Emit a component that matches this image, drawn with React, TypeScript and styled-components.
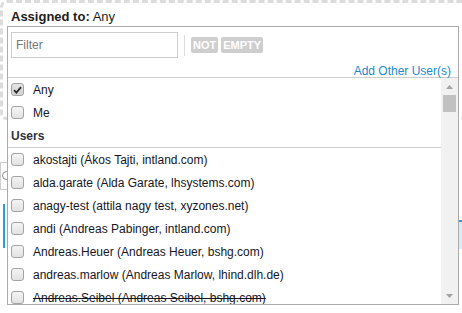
import React from 'react';
import styled, { createGlobalStyle } from 'styled-components';
import { Search } from 'lucide-react';

const GlobalStyle = createGlobalStyle`
  html, body {
    margin: 0;
    padding: 0;
    background: #fff;
  }
  body {
    font-family: "Liberation Sans", Arial, sans-serif;
    overflow: hidden;
  }
`;

const Page = styled.div`
  position: relative;
  width: 462px;
  height: 313px;
  overflow: hidden;
`;

const FilterBox = styled.div`
  box-sizing: border-box;
  width: 600px;
  height: 120px;
  border: 3px dashed #dcdcdc;
  border-radius: 7px;
  padding: 6px 8px;
`;

const FieldLabel = styled.div`
  font-size: 13px;
  line-height: 15px;
  color: #1d1d1d;

  b {
    font-weight: bold;
  }
`;

const SearchField = styled.div`
  display: flex;
  align-items: center;
  width: 300px;
  height: 26px;
  margin-top: 42px;
  border: 1px solid #ccc;
  color: #888;
`;

const SelectedCell = styled.div`
  display: flex;
  justify-content: flex-end;
  align-items: flex-start;
  height: 44px;
  margin-top: 14px;
  margin-left: 3px;
  border-left: 2px solid #2a9fd6;
`;

const CyanBlock = styled.div`
  width: 40px;
  height: 27px;
  margin-top: 16px;
  background: #cdeefb;
  border-top: 2px solid #2a9fd6;
`;

const Popup = styled.div`
  position: absolute;
  left: 7px;
  top: 26px;
  box-sizing: border-box;
  width: 452px;
  height: 279px;
  border: 1px solid #ababab;
  background: #fff;
  display: flex;
  flex-direction: column;
`;

const FilterRow = styled.div`
  display: flex;
  align-items: center;
  padding: 5px 3px 0;
`;

const FilterInput = styled.input`
  box-sizing: border-box;
  width: 167px;
  height: 26px;
  margin: 0;
  padding: 0 4px;
  border: 1px solid #ccc;
  outline: none;
  font-family: inherit;
  font-size: 12px;
  color: #222;

  &::placeholder {
    color: #777;
  }
`;

const Separator = styled.span`
  width: 1px;
  height: 21px;
  margin: 0 6px;
  background: #dcdcdc;
`;

const Tag = styled.span`
  height: 16px;
  padding: 0 2px;
  margin-right: 3px;
  border-radius: 2px;
  background: #cecece;
  color: #fff;
  font-size: 11px;
  font-weight: bold;
  line-height: 16px;
`;

const LinkRow = styled.div`
  height: 20px;
  padding: 3px 7px 0 0;
  box-sizing: border-box;
  text-align: right;
  border-bottom: 1px solid #cfcfcf;
`;

const AddLink = styled.a`
  font-size: 12px;
  line-height: 14px;
  color: #1b8bd0;
  text-decoration: none;
`;

const ListArea = styled.div`
  display: flex;
  flex: 1;
  min-height: 0;
`;

const List = styled.div`
  flex: 1;
  overflow: hidden;
`;

const Row = styled.label`
  display: flex;
  align-items: center;
  height: 23px;
  padding-left: 3px;
  font-size: 12px;
  color: #16161f;
  white-space: nowrap;
`;

const ItemText = styled.span<{ $removed?: boolean }>`
  text-decoration: ${(p) => (p.$removed ? 'line-through' : 'none')};
`;

const GroupHeader = styled.div`
  display: flex;
  align-items: center;
  height: 23px;
  padding-left: 3px;
  border-bottom: 1px solid #cfcfcf;
  font-size: 12px;
  font-weight: bold;
  color: #2f3440;
`;

const Box = styled.span<{ $checked?: boolean }>`
  box-sizing: border-box;
  display: flex;
  align-items: center;
  justify-content: center;
  width: 13px;
  height: 13px;
  margin-right: 9px;
  border: 1px solid #a3a3a3;
  border-radius: 3px;
  background: ${(p) =>
    p.$checked
      ? 'linear-gradient(#e4e4e4, #d2d2d2)'
      : 'linear-gradient(#f4f4f4, #e2e2e2)'};
`;

const Scrollbar = styled.div`
  display: flex;
  flex-direction: column;
  width: 17px;
  background: #f1f1f1;
`;

const ArrowButton = styled.div`
  display: flex;
  align-items: center;
  justify-content: center;
  height: 17px;
`;

const Thumb = styled.div`
  height: 17px;
  margin: 0 2px;
  background: #c1c1c1;
`;

const Track = styled.div`
  flex: 1;
`;

const Arrow = ({ up }: { up?: boolean }) => (
  <svg width="7" height="4" viewBox="0 0 7 4">
    <path d={up ? 'M0 4 L3.5 0 L7 4 Z' : 'M0 0 L3.5 4 L7 0 Z'} fill="#a3a3a3" />
  </svg>
);

const Checkbox = ({ checked }: { checked?: boolean }) => (
  <Box $checked={checked}>
    {checked && (
      <svg width="9" height="8" viewBox="0 0 9 8">
        <path d="M1 4.2 L3.4 6.6 L8 1.2" stroke="#2b2b2b" strokeWidth="1.8" fill="none" />
      </svg>
    )}
  </Box>
);

const users = [
  { text: 'akostajti (Ákos Tajti, intland.com)' },
  { text: 'alda.garate (Alda Garate, lhsystems.com)' },
  { text: 'anagy-test (attila nagy test, xyzones.net)' },
  { text: 'andi (Andreas Pabinger, intland.com)' },
  { text: 'Andreas.Heuer (Andreas Heuer, bshg.com)' },
  { text: 'andreas.marlow (Andreas Marlow, lhind.dlh.de)' },
  { text: 'Andreas.Seibel (Andreas Seibel, bshg.com)', removed: true },
];

export default function App() {
  return (
    <Page>
      <GlobalStyle />
      <FilterBox>
        <FieldLabel>
          <b>Assigned to:</b> Any
        </FieldLabel>
      </FilterBox>
      <SearchField>
        <Search size={12} strokeWidth={2} />
      </SearchField>
      <SelectedCell>
        <CyanBlock />
      </SelectedCell>

      <Popup>
        <FilterRow>
          <FilterInput placeholder="Filter" />
          <Separator />
          <Tag>NOT</Tag>
          <Tag>EMPTY</Tag>
        </FilterRow>
        <LinkRow>
          <AddLink href="#">Add Other User(s)</AddLink>
        </LinkRow>
        <ListArea>
          <List>
            <Row>
              <Checkbox checked />
              <ItemText>Any</ItemText>
            </Row>
            <Row>
              <Checkbox />
              <ItemText>Me</ItemText>
            </Row>
            <GroupHeader>Users</GroupHeader>
            {users.map((u) => (
              <Row key={u.text}>
                <Checkbox />
                <ItemText $removed={u.removed}>{u.text}</ItemText>
              </Row>
            ))}
          </List>
          <Scrollbar>
            <ArrowButton>
              <Arrow up />
            </ArrowButton>
            <Thumb />
            <Track />
            <ArrowButton>
              <Arrow />
            </ArrowButton>
          </Scrollbar>
        </ListArea>
      </Popup>
    </Page>
  );
}
